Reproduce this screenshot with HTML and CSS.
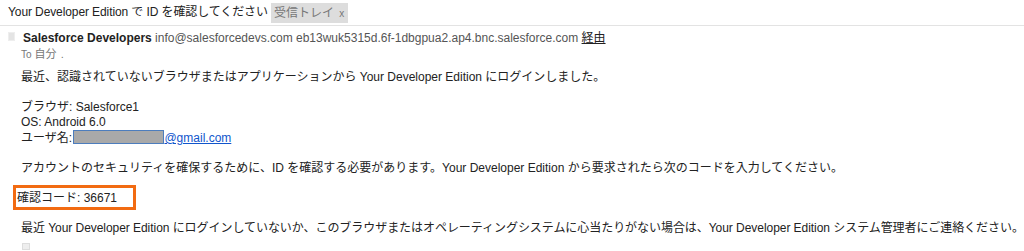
FILE: index.html
```html
<!doctype html>
<html lang="ja">
<head>
	<meta charset="UTF-8">
	<title>Your Developer Edition で ID を確認してください</title>
	<link rel="stylesheet" href="styles.css">
</head>
<body>
	<div class="subject">
		<span class="subject-text">Your Developer Edition で ID を確認してください</span>
		<span class="label">受信トレイ <span class="label-x">x</span></span>
	</div>
	<div class="mail">
		<div class="sender">
			<span class="sender-icon"></span><b class="sender-name">Salesforce Developers</b>
			<span class="sender-addr">info@salesforcedevs.com eb13wuk5315d.6f-1dbgpua2.ap4.bnc.salesforce.com</span>
			<a href="javascript:;" class="via">経由</a>
		</div>
		<div class="to"><span class="to-label">To</span> 自分 <span class="to-dot">.</span></div>
		<div class="body">
			<p>最近、認識されていないブラウザまたはアプリケーションから Your Developer Edition にログインしました。</p>
			<p>ブラウザ: Salesforce1<br>
			OS: Android 6.0<br>
			ユーザ名: <span class="redact"></span><a href="javascript:;" class="mailto">@gmail.com</a></p>
			<p>アカウントのセキュリティを確保するために、ID を確認する必要があります。Your Developer Edition から要求されたら次のコードを入力してください。</p>
			<p><span class="code-box">確認コード: 36671</span></p>
			<p class="last">最近 Your Developer Edition にログインしていないか、このブラウザまたはオペレーティングシステムに心当たりがない場合は、Your Developer Edition システム管理者にご連絡ください。</p>
			<span class="trim"></span>
		</div>
	</div>
</body>
</html>
```
FILE: styles.css
```css
* { padding: 0; margin: 0; }
body { background: #fff; color: #222; font: 12px/15px "Liberation Sans", Arial, "Noto Sans CJK JP", sans-serif; }
a { color: #15c; }

.subject { display: flex; align-items: center; gap: 3px; height: 25px; padding-left: 8px; border-bottom: 1px solid #e3e3e3; }
.subject-text { font-size: 12px; color: #222; letter-spacing: -0.1px; }
.label { background: #ddd; color: #777; padding: 2px 4px 1px 3px; line-height: 16px; }
.label-x { font-size: 10px; margin-left: 2px; }

.mail { padding-left: 21px; }
.sender { margin-top: 5px; white-space: nowrap; }
.sender-icon { display: inline-block; width: 5px; height: 7px; margin-left: -13px; margin-right: 8px; background: #e4e4e4; border: 1px solid #eee; vertical-align: 1px; }
.sender-name { color: #222; }
.sender-addr { color: #555; }
.sender .via { color: #222; }

.to { margin-top: 1px; color: #777; font-size: 11px; }
.to-label { font-size: 10px; }
.to-dot { margin-left: 1px; }

.body { padding-top: 8px; }
.body p { margin-bottom: 15px; white-space: nowrap; }
.body .last { letter-spacing: -0.05px; margin-bottom: 7px; }
.redact { display: inline-block; width: 89px; height: 12px; background: #a9a9a9; border: 1px solid #4d7dbd; vertical-align: -2px; margin-left: -2px; }
.code-box { display: inline-block; border: 3px solid #f26b12; padding: 3px 16px 1px 1px; margin: -6px 0 -4px -8px; }
.trim { display: block; width: 6px; height: 5px; margin-left: 1px; background: #eee; border: 1px solid #ddd; }
```
